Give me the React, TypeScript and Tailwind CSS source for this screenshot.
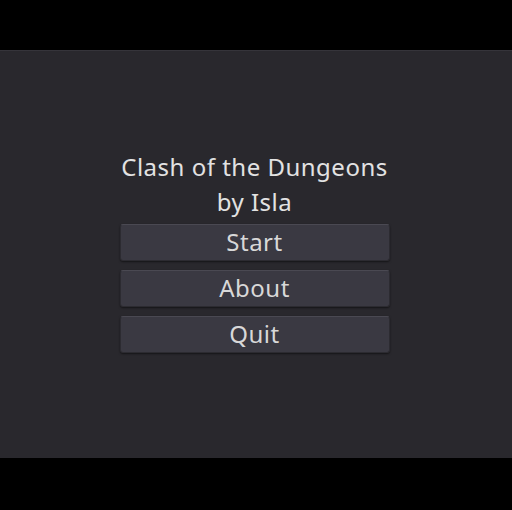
export default function App() {
  const buttons = ['Start', 'About', 'Quit']

  return (
    <div className="w-[512px] h-[510px] bg-black flex flex-col" style={{ fontFamily: '"Noto Sans", sans-serif' }}>
      <div className="h-[50px] bg-black" />
      <div className="h-[408px] bg-[#29282d] border-t border-[#35343a] flex flex-col items-center pt-[98px] pr-[3px]">
        <div className="text-[24px] leading-[35px] tracking-[0.5px] text-[#e2e2e2] text-center">
          <div>Clash of the Dungeons</div>
          <div>by Isla</div>
        </div>
        <div className="mt-[5px] flex flex-col gap-[9px] w-[270px]">
          {buttons.map((label) => (
            <div
              key={label}
              className="h-[37px] pb-[2px] bg-[#3a3942] border border-[#2c2b31] border-t-[#4a4952] rounded-[3px] flex items-center justify-center text-[24px] tracking-[0.5px] text-[#d8d8d8] shadow-[0_1px_2px_rgba(0,0,0,0.5)]"
            >
              {label}
            </div>
          ))}
        </div>
      </div>
      <div className="flex-1 bg-black" />
    </div>
  )
}
